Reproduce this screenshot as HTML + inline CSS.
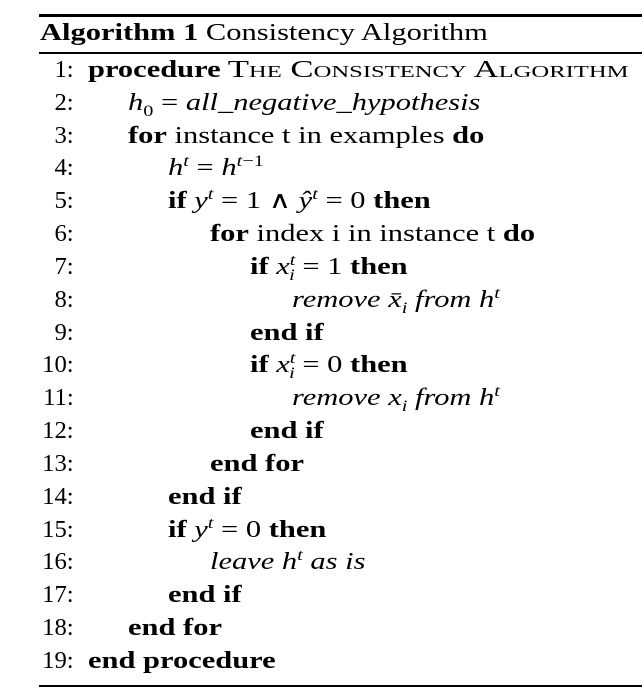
<!DOCTYPE html>
<html><head><meta charset="utf-8"><style>
body{margin:0;width:642px;height:692px;background:#fff;position:relative;overflow:hidden;font-family:"Liberation Serif",serif;color:#000;}
.rule{position:absolute;left:39px;right:0;background:#000}
.title{position:absolute;left:40px;top:17px;font-size:24px;line-height:32px;white-space:nowrap;transform:scaleX(1.27);transform-origin:left center}
.l{position:absolute;left:0;width:642px;height:33px;line-height:33px;font-size:24px;white-space:nowrap}
.n{position:absolute;right:568px;text-align:right;transform:scaleX(1.03);transform-origin:right center}
.c{position:absolute;transform:scaleX(1.27);transform-origin:left center}
b{font-weight:bold}
i{font-style:italic}
.sc{font-variant:small-caps;display:inline-block;transform:scaleX(1.14);transform-origin:left center}
sup,sub{font-size:16px;line-height:0}
</style></head><body>
<div class="rule" style="top:14px;height:3px"></div>
<div class="title"><b>Algorithm 1</b> Consistency Algorithm</div>
<div class="rule" style="top:52px;height:1.5px"></div>
<div class="rule" style="top:685px;height:1.5px"></div>

<div class="l" style="top:54px"><span class="n">1:</span><span class="c" style="left:88px"><b>procedure</b> <span class="sc">The Consistency Algorithm</span></span></div>
<div class="l" style="top:87px"><span class="n">2:</span><span class="c" style="left:128px"><i>h</i><sub>0</sub> = <i>all_negative_hypothesis</i></span></div>
<div class="l" style="top:120px"><span class="n">3:</span><span class="c" style="left:128px"><b>for</b> instance t in examples <b>do</b></span></div>
<div class="l" style="top:152px"><span class="n">4:</span><span class="c" style="left:168px"><i>h<sup>t</sup></i> = <i>h<sup>t</sup></i><sup>−1</sup></span></div>
<div class="l" style="top:185px"><span class="n">5:</span><span class="c" style="left:168px"><b>if</b> <i>y<sup>t</sup></i> = 1 ∧ <i>ŷ<sup>t</sup></i> = 0 <b>then</b></span></div>
<div class="l" style="top:218px"><span class="n">6:</span><span class="c" style="left:210px"><b>for</b> index i in instance t <b>do</b></span></div>
<div class="l" style="top:251px"><span class="n">7:</span><span class="c" style="left:250px"><b>if</b> <i>x</i><sup><i>t</i></sup><sub style="margin-left:-5px"><i>i</i></sub> = 1 <b>then</b></span></div>
<div class="l" style="top:284px"><span class="n">8:</span><span class="c" style="left:292px"><i>remove x̄<sub>i</sub> from h<sup>t</sup></i></span></div>
<div class="l" style="top:317px"><span class="n">9:</span><span class="c" style="left:250px"><b>end if</b></span></div>
<div class="l" style="top:349px"><span class="n">10:</span><span class="c" style="left:250px"><b>if</b> <i>x</i><sup><i>t</i></sup><sub style="margin-left:-5px"><i>i</i></sub> = 0 <b>then</b></span></div>
<div class="l" style="top:382px"><span class="n">11:</span><span class="c" style="left:292px"><i>remove x<sub>i</sub> from h<sup>t</sup></i></span></div>
<div class="l" style="top:415px"><span class="n">12:</span><span class="c" style="left:250px"><b>end if</b></span></div>
<div class="l" style="top:448px"><span class="n">13:</span><span class="c" style="left:210px"><b>end for</b></span></div>
<div class="l" style="top:481px"><span class="n">14:</span><span class="c" style="left:168px"><b>end if</b></span></div>
<div class="l" style="top:514px"><span class="n">15:</span><span class="c" style="left:168px"><b>if</b> <i>y<sup>t</sup></i> = 0 <b>then</b></span></div>
<div class="l" style="top:546px"><span class="n">16:</span><span class="c" style="left:210px"><i>leave h<sup>t</sup> as is</i></span></div>
<div class="l" style="top:579px"><span class="n">17:</span><span class="c" style="left:168px"><b>end if</b></span></div>
<div class="l" style="top:612px"><span class="n">18:</span><span class="c" style="left:128px"><b>end for</b></span></div>
<div class="l" style="top:645px"><span class="n">19:</span><span class="c" style="left:88px"><b>end procedure</b></span></div>
</body></html>
